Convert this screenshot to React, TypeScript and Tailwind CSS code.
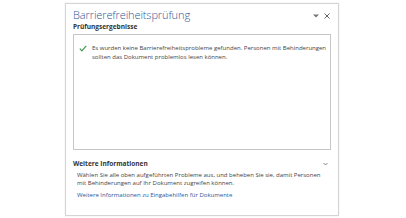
import React from "react";

export default function App() {
  return (
    <div className="w-[406px] h-[218px] bg-white pl-[65px] pt-[3px] font-['Open_Sans',sans-serif] text-[#444]">
      <div className="w-[274px] h-[213px] border border-[#d4d4d4] shadow-[0_0_2px_rgba(0,0,0,0.08)] flex flex-col px-[7px]">
        <div className="flex items-start justify-between pt-[4px] shrink-0">
          <h1 className="text-[11px] leading-[14px] font-light tracking-[-0.1px] text-[#2b579a]">
            Barrierefreiheitsprüfung
          </h1>
          <div className="flex items-center gap-[5px] pt-[5px] pr-[1px]">
            <svg width="6" height="4" viewBox="0 0 6 4">
              <path d="M0 0.5 L6 0.5 L3 3.5 Z" fill="#777" />
            </svg>
            <svg width="6" height="6" viewBox="0 0 6 6">
              <path d="M0.5 0.5 L5.5 5.5 M5.5 0.5 L0.5 5.5" stroke="#666" strokeWidth="1" />
            </svg>
          </div>
        </div>
        <div className="text-[6.5px] leading-[8px] font-bold text-[#333] mt-[1px] shrink-0">
          Prüfungsergebnisse
        </div>
        <div className="mt-[3px] h-[116px] shrink-0 border border-[#c6c6c6] flex items-start gap-[5px] pl-[5px] pt-[9px]">
          <svg width="8" height="7" viewBox="0 0 8 7" className="mt-[1px] shrink-0">
            <path d="M0.8 3.6 L2.9 5.8 L7.2 0.8" fill="none" stroke="#3e9a52" strokeWidth="1.2" />
          </svg>
          <p className="text-[6px] leading-[9px]">
            Es wurden keine Barrierefreiheitsprobleme gefunden. Personen mit Behinderungen
            <br />
            sollten das Dokument problemlos lesen können.
          </p>
        </div>
        <div className="flex items-center justify-between mt-[9px] h-[9px] shrink-0">
          <div className="text-[6.5px] leading-[9px] font-bold text-[#333]">
            Weitere Informationen
          </div>
          <svg width="5" height="4" viewBox="0 0 5 4" className="mr-[3px]">
            <path d="M0.5 1 L2.5 3 L4.5 1" fill="none" stroke="#777" strokeWidth="0.9" />
          </svg>
        </div>
        <div className="pl-[4px] mt-[3px] shrink-0">
          <p className="text-[6px] leading-[8px]">
            Wählen Sie alle oben aufgeführten Probleme aus, und beheben Sie sie, damit Personen
            <br />
            mit Behinderungen auf Ihr Dokument zugreifen können.
          </p>
          <p className="text-[6px] leading-[8px] text-[#2b579a] mt-[4px]">
            Weitere Informationen zu Eingabehilfen für Dokumente
          </p>
        </div>
      </div>
    </div>
  );
}
